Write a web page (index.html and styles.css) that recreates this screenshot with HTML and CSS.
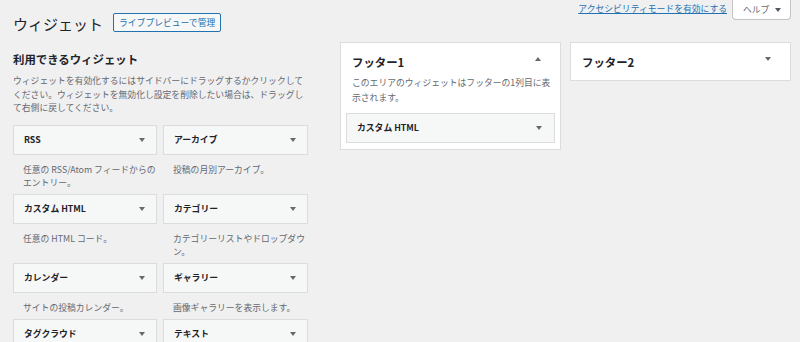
FILE: index.html
```html
<!DOCTYPE html>
<html lang="ja">
<head>
<meta charset="utf-8">
<title>ウィジェット</title>
<link rel="stylesheet" href="styles.css">
</head>
<body>
<div class="page">
  <header class="top">
    <div class="title-group">
      <h1 class="title">ウィジェット</h1>
      <a class="btn-preview">ライブプレビューで管理</a>
    </div>
    <div class="screen-links">
      <a class="a11y-link">アクセシビリティモードを有効にする</a>
      <button class="help-btn">ヘルプ<span class="caret-down small"></span></button>
    </div>
  </header>

  <div class="main">
    <section class="available">
      <h2 class="available-title">利用できるウィジェット</h2>
      <p class="available-desc">ウィジェットを有効化するにはサイドバーにドラッグするかクリックして<br>ください。ウィジェットを無効化し設定を削除したい場合は、ドラッグし<br>て右側に戻してください。</p>
      <div class="widget-grid">
        <div class="widget-item">
          <div class="widget-box"><span class="widget-name">RSS</span><span class="caret-down"></span></div>
          <p class="widget-desc">任意の RSS/Atom フィードからの<br>エントリー。</p>
        </div>
        <div class="widget-item">
          <div class="widget-box"><span class="widget-name">アーカイブ</span><span class="caret-down"></span></div>
          <p class="widget-desc">投稿の月別アーカイブ。</p>
        </div>
        <div class="widget-item">
          <div class="widget-box"><span class="widget-name">カスタム HTML</span><span class="caret-down"></span></div>
          <p class="widget-desc">任意の HTML コード。</p>
        </div>
        <div class="widget-item">
          <div class="widget-box"><span class="widget-name">カテゴリー</span><span class="caret-down"></span></div>
          <p class="widget-desc">カテゴリーリストやドロップダウ<br>ン。</p>
        </div>
        <div class="widget-item">
          <div class="widget-box"><span class="widget-name">カレンダー</span><span class="caret-down"></span></div>
          <p class="widget-desc">サイトの投稿カレンダー。</p>
        </div>
        <div class="widget-item">
          <div class="widget-box"><span class="widget-name">ギャラリー</span><span class="caret-down"></span></div>
          <p class="widget-desc">画像ギャラリーを表示します。</p>
        </div>
        <div class="widget-item">
          <div class="widget-box"><span class="widget-name">タグクラウド</span><span class="caret-down"></span></div>
        </div>
        <div class="widget-item">
          <div class="widget-box"><span class="widget-name">テキスト</span><span class="caret-down"></span></div>
        </div>
      </div>
    </section>

    <div class="sidebars">
      <section class="sidebar open">
        <div class="sidebar-head">
          <h2 class="sidebar-name">フッター1</h2>
          <span class="caret-up"></span>
        </div>
        <p class="sidebar-desc">このエリアのウィジェットはフッターの1列目に表<br>示されます。</p>
        <div class="widget-box in-sidebar"><span class="widget-name">カスタム HTML</span><span class="caret-down"></span></div>
      </section>
      <section class="sidebar">
        <div class="sidebar-head closed">
          <h2 class="sidebar-name">フッター2</h2>
          <span class="caret-down head"></span>
        </div>
      </section>
    </div>
  </div>
</div>
</body>
</html>
```

FILE: styles.css
```css
* { box-sizing: border-box; }

html, body {
  margin: 0;
  padding: 0;
  background: #f0f0f1;
  height: 100%;
  overflow: hidden;
}

body {
  font-family: "Noto Sans", "Noto Sans CJK JP", sans-serif;
  font-size: 8.8px;
  color: #3c434a;
}

.page {
  padding: 0 9px 0 13px;
}

/* header */
.top {
  display: flex;
  justify-content: space-between;
  align-items: flex-start;
  height: 42px;
}

.title-group {
  display: flex;
  align-items: center;
  margin-top: 13px;
  height: 19px;
}

.title {
  margin: 0;
  font-family: "Noto Sans CJK JP", sans-serif;
  font-size: 15px;
  font-weight: 400;
  line-height: 19px;
  color: #1d2327;
  position: relative;
  top: 1px;
}

.btn-preview {
  margin-left: 10px;
  height: 19px;
  padding: 0 5px;
  border: 1px solid #2271b1;
  border-radius: 2px;
  background: #f6f7f7;
  color: #2271b1;
  font-family: "Noto Sans CJK JP", sans-serif;
  font-size: 8.8px;
  line-height: 17px;
  white-space: nowrap;
}

.screen-links {
  display: flex;
  align-items: flex-start;
}

.a11y-link {
  color: #2271b1;
  text-decoration: underline;
  font-family: "Noto Sans CJK JP", sans-serif;
  font-size: 8.8px;
  line-height: 17px;
  white-space: nowrap;
}

.help-btn {
  margin-left: 5px;
  width: 59px;
  height: 20px;
  padding: 0 0 0 10px;
  display: flex;
  align-items: center;
  background: #fff;
  border: 1px solid #c3c4c7;
  border-top: none;
  border-radius: 0 0 4px 4px;
  color: #646970;
  font-family: "Noto Sans CJK JP", sans-serif;
  font-size: 8.8px;
  line-height: 19px;
}

.help-btn .caret-down {
  margin-left: 6px;
}

/* carets */
.caret-down, .caret-up {
  display: inline-block;
  width: 0;
  height: 0;
  border-left: 3px solid transparent;
  border-right: 3px solid transparent;
}

.caret-down { border-top: 4px solid #646970; }
.caret-up { border-bottom: 4px solid #646970; }
.caret-down.small { border-top-color: #50575e; }

/* main area */
.main {
  display: flex;
  align-items: flex-start;
}

.available {
  width: 295px;
  flex: none;
}

.available-title {
  margin: 10px 0 0;
  font-family: "Noto Sans CJK JP", sans-serif;
  font-size: 11.4px;
  font-weight: 700;
  line-height: 14px;
  color: #1d2327;
}

.available-desc {
  margin: 8px 0 10px;
  font-family: "Noto Sans CJK JP", sans-serif;
  font-size: 8.8px;
  line-height: 13.5px;
  color: #646970;
  white-space: nowrap;
}

.widget-grid {
  display: grid;
  grid-template-columns: 144px 145px;
  column-gap: 6px;
  align-items: start;
}

.widget-box {
  height: 30px;
  display: flex;
  align-items: center;
  justify-content: space-between;
  padding: 0 11px 0 10px;
  background: #f6f7f7;
  border: 1px solid #dcdcde;
}

.widget-name {
  font-family: "Noto Sans CJK JP", sans-serif;
  font-size: 8.8px;
  font-weight: 700;
  color: #1d2327;
  line-height: 14px;
  white-space: nowrap;
}

.widget-desc {
  margin: 0;
  padding: 8px 6px 5px 10px;
  font-family: "Noto Sans CJK JP", sans-serif;
  font-size: 8.8px;
  line-height: 13px;
  color: #646970;
  white-space: nowrap;
}

/* sidebars */
.sidebars {
  margin-left: 32px;
  display: flex;
  gap: 9px;
  align-items: flex-start;
}

.sidebar {
  width: 221px;
  background: #fff;
  border: 1px solid #dcdcde;
}

.sidebar.open {
  padding-bottom: 6px;
}

.sidebar-head {
  display: flex;
  justify-content: space-between;
  align-items: flex-start;
  padding: 12px 19px 7px 11px;
}

.sidebar-head.closed {
  padding-bottom: 11px;
}

.sidebar-head .caret-up,
.sidebar-head .caret-down {
  margin-top: 2px;
}

.sidebar-name {
  margin: 0;
  font-family: "Noto Sans CJK JP", sans-serif;
  font-size: 11.4px;
  font-weight: 700;
  line-height: 14px;
  color: #1d2327;
}

.sidebar-desc {
  margin: 0;
  padding: 0 11px;
  font-family: "Noto Sans CJK JP", sans-serif;
  font-size: 8.8px;
  line-height: 14.5px;
  color: #646970;
  white-space: nowrap;
}

.widget-box.in-sidebar {
  margin: 8px 5px 0;
  padding: 0 12px 0 10px;
  border-color: #dcdcde;
}
```
